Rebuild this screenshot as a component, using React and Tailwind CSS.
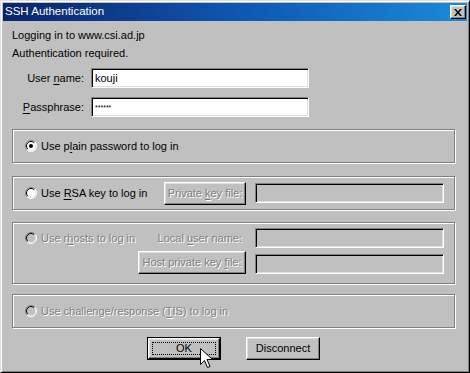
import React from "react";

const raised =
  "bg-[#c0c0c0] border border-t-white border-l-white border-r-black border-b-black shadow-[inset_-1px_-1px_0_#808080,inset_1px_1px_0_#dfdfdf]";
const sunken =
  "border border-t-[#808080] border-l-[#808080] border-r-white border-b-white shadow-[inset_1px_1px_0_#000,inset_-1px_-1px_0_#dfdfdf]";
const etched = "border border-[#808080] shadow-[inset_1px_1px_0_#fff,1px_1px_0_#fff]";
const dim = "text-[#808080] [text-shadow:1px_1px_0_#fff]";

function Radio({ checked, disabled }) {
  const fill = disabled ? "#c0c0c0" : "#fff";
  return (
    <svg width="12" height="12" viewBox="0 0 12 12" className="shrink-0">
      <circle cx="6" cy="6" r="5.5" fill={fill} />
      <path d="M2.1 9.9 A5.5 5.5 0 0 1 9.9 2.1" fill="none" stroke="#808080" />
      <path d="M9.9 2.1 A5.5 5.5 0 0 1 2.1 9.9" fill="none" stroke="#fff" />
      <path d="M2.8 9.2 A4.5 4.5 0 0 1 9.2 2.8" fill="none" stroke="#000" />
      <path d="M9.2 2.8 A4.5 4.5 0 0 1 2.8 9.2" fill="none" stroke="#dfdfdf" />
      {checked && <circle cx="6" cy="6" r="2" fill="#000" />}
    </svg>
  );
}

function U({ children }) {
  return <span className="underline underline-offset-[2px]">{children}</span>;
}

export default function App() {
  return (
    <div className="relative w-[470px] h-[373px] bg-[#c0c0c0] border border-t-[#dfdfdf] border-l-[#dfdfdf] border-r-black border-b-black shadow-[inset_1px_1px_0_#fff,inset_-1px_-1px_0_#808080] p-[2px] font-['Liberation_Sans',Arial,sans-serif] text-[11px] text-black leading-none select-none">
      {/* title bar */}
      <div className="h-[18px] flex items-center justify-between bg-gradient-to-r from-[#0a246a] via-[#0f56b0] to-[#1c8ad6] pl-[2px] pr-[1px]">
        <span className="text-white text-[11.5px]">SSH Authentication</span>
        <div className={`w-[16px] h-[14px] flex items-center justify-center ${raised}`}>
          <svg width="8" height="7" viewBox="0 0 8 7">
            <path d="M0 0h2l2 2.5L6 0h2L5 3.5 8 7H6L4 4.5 2 7H0l3-3.5z" fill="#000" />
          </svg>
        </div>
      </div>

      <div className="pl-[9px]">
        <div className="mt-[5px] leading-[18px]">
          <div>Logging in to www.csi.ad.jp</div>
          <div>Authentication required.</div>
        </div>

        <div className="mt-[6px] flex flex-col gap-[9px]">
          <div className="flex items-center gap-[7px]">
            <div className="w-[72px] text-right">
              User <U>n</U>ame:
            </div>
            <div className={`w-[218px] h-[20px] bg-white flex items-center pl-[3px] ${sunken}`}>kouji</div>
          </div>
          <div className="flex items-center gap-[7px]">
            <div className="w-[72px] text-right">
              <U>P</U>assphrase:
            </div>
            <div className={`w-[218px] h-[20px] bg-white flex items-center pl-[3px] text-[7px] ${sunken}`}>
              ******
            </div>
          </div>
        </div>

        {/* plain password */}
        <div className={`mt-[12px] w-[443px] h-[34px] flex items-center pl-[12px] gap-[4px] ${etched}`}>
          <Radio checked />
          <span>
            Use p<U>l</U>ain password to log in
          </span>
        </div>

        {/* RSA */}
        <div className={`mt-[13px] w-[443px] h-[34px] flex items-center pl-[12px] pr-[10px] ${etched}`}>
          <div className="flex-1 flex items-center gap-[4px]">
            <Radio />
            <span>
              Use <U>R</U>SA key to log in
            </span>
          </div>
          <div className={`w-[82px] h-[23px] flex items-center justify-center ${raised} ${dim}`}>
            <span>
              Private <U>k</U>ey file:
            </span>
          </div>
          <div className={`ml-[9px] w-[189px] h-[20px] bg-[#c0c0c0] ${sunken}`} />
        </div>

        {/* rhosts */}
        <div className={`mt-[12px] w-[443px] h-[62px] pt-[5px] pl-[12px] pr-[10px] flex flex-col gap-[3px] ${etched}`}>
          <div className="h-[20px] flex items-center">
            <div className="flex-1 flex items-center gap-[4px]">
              <Radio disabled />
              <span className={dim}>
                Use r<U>h</U>osts to log in
              </span>
            </div>
            <span className={`mr-[13px] ${dim}`}>
              Local <U>u</U>ser name:
            </span>
            <div className={`w-[189px] h-[20px] bg-[#c0c0c0] ${sunken}`} />
          </div>
          <div className="flex items-center justify-end">
            <div className={`w-[108px] h-[23px] flex items-center justify-center ${raised} ${dim}`}>
              <span>
                Host private key <U>f</U>ile:
              </span>
            </div>
            <div className={`ml-[9px] mt-[2px] w-[189px] h-[20px] bg-[#c0c0c0] ${sunken}`} />
          </div>
        </div>

        {/* TIS */}
        <div className={`mt-[10px] w-[443px] h-[34px] flex items-center pl-[12px] gap-[4px] ${etched}`}>
          <Radio disabled />
          <span className={dim}>
            Use challenge/response (<U>T</U>IS) to log in
          </span>
        </div>

        {/* buttons */}
        <div className="mt-[9px] ml-[135px] flex gap-[25px]">
          <div className="w-[74px] h-[23px] border border-black">
            <div className={`w-full h-full flex items-center justify-center p-[3px] ${raised}`}>
              <div className="w-full h-full border border-dotted border-black flex items-center justify-center">
                OK
              </div>
            </div>
          </div>
          <div className={`w-[74px] h-[23px] flex items-center justify-center ${raised}`}>Disconnect</div>
        </div>
      </div>

      {/* mouse pointer */}
      <svg className="absolute left-[199px] top-[347px]" width="13" height="21" viewBox="0 0 13 21">
        <path
          d="M0.5 0.5 L0.5 16.5 L4.5 12.5 L7.5 19.5 L10 18.5 L7 11.5 L12.5 11.5 Z"
          fill="#fff"
          stroke="#000"
          strokeWidth="1"
          strokeLinejoin="miter"
        />
      </svg>
    </div>
  );
}
